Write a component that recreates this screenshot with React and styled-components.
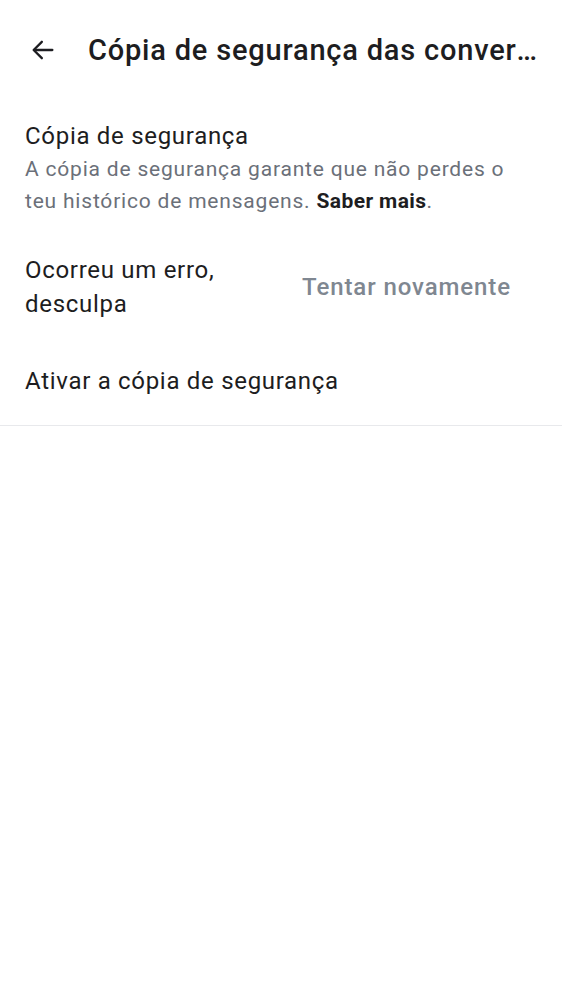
import React from 'react';
import styled, { createGlobalStyle } from 'styled-components';

const GlobalStyle = createGlobalStyle`
  html, body {
    margin: 0;
    padding: 0;
    background: #ffffff;
    font-family: Roboto, "Noto Sans", sans-serif;
    color: #1d1d21;
  }
`;

const BackIcon = () => (
  <svg width="28" height="28" viewBox="0 0 24 24" fill="none" stroke="currentColor" strokeWidth="2" strokeLinecap="round" strokeLinejoin="round">
    <path d="M20 12H4.5" />
    <path d="M11 5l-7 7 7 7" />
  </svg>
);

const App = () => {
  return (
    <Page>
      <GlobalStyle />
      <Header>
        <BackButton aria-label="Voltar">
          <BackIcon />
        </BackButton>
        <Title>Cópia de segurança das conversas</Title>
      </Header>

      <Intro>
        <IntroTitle>Cópia de segurança</IntroTitle>
        <IntroText>
          A cópia de segurança garante que não perdes o teu histórico de mensagens.{' '}
          <strong>Saber mais</strong>.
        </IntroText>
      </Intro>

      <ErrorRow>
        <RowText>Ocorreu um erro, desculpa</RowText>
        <RetryButton>Tentar novamente</RetryButton>
      </ErrorRow>

      <ActionRow>Ativar a cópia de segurança</ActionRow>

      <Divider />
    </Page>
  );
};

const Page = styled.div`
  width: 562px;
  min-height: 1000px;
  background: #fff;
`;

const Header = styled.header`
  display: flex;
  align-items: center;
  height: 100px;
  padding: 0 20px 0 29px;
  box-sizing: border-box;
`;

const BackButton = styled.button`
  display: flex;
  align-items: center;
  justify-content: center;
  padding: 0;
  border: none;
  background: none;
  color: #1d1d21;
  margin-right: 31px;
  cursor: pointer;
`;

const Title = styled.h1`
  margin: 0;
  font-size: 29px;
  font-weight: 500;
  letter-spacing: 0.8px;
  white-space: nowrap;
  overflow: hidden;
  text-overflow: ellipsis;
  flex: 1;
  min-width: 0;
`;

const Intro = styled.section`
  padding: 19px 25px 0;
`;

const IntroTitle = styled.h2`
  margin: 0;
  font-size: 24px;
  font-weight: 400;
  line-height: 34px;
  letter-spacing: 0.7px;
`;

const IntroText = styled.p`
  margin: 0;
  font-size: 21px;
  line-height: 32px;
  color: #6b7079;
  letter-spacing: 0.8px;

  strong {
    color: #1d1d21;
    font-weight: 700;
    letter-spacing: 0.4px;
  }
`;

const ErrorRow = styled.div`
  display: flex;
  align-items: center;
  justify-content: space-between;
  padding: 36px 51px 0 25px;
`;

const RowText = styled.div`
  width: 250px;
  font-size: 24px;
  line-height: 34px;
  letter-spacing: 0.7px;
`;

const RetryButton = styled.button`
  padding: 0;
  border: none;
  background: none;
  font-family: inherit;
  font-size: 24px;
  font-weight: 500;
  letter-spacing: 0.9px;
  color: #7f8791;
  cursor: pointer;
`;

const ActionRow = styled.div`
  padding: 43px 25px 27px;
  font-size: 24px;
  line-height: 34px;
  letter-spacing: 0.7px;
`;

const Divider = styled.hr`
  margin: 0;
  border: none;
  height: 1px;
  background: #e8e9ec;
`;

export default App;
